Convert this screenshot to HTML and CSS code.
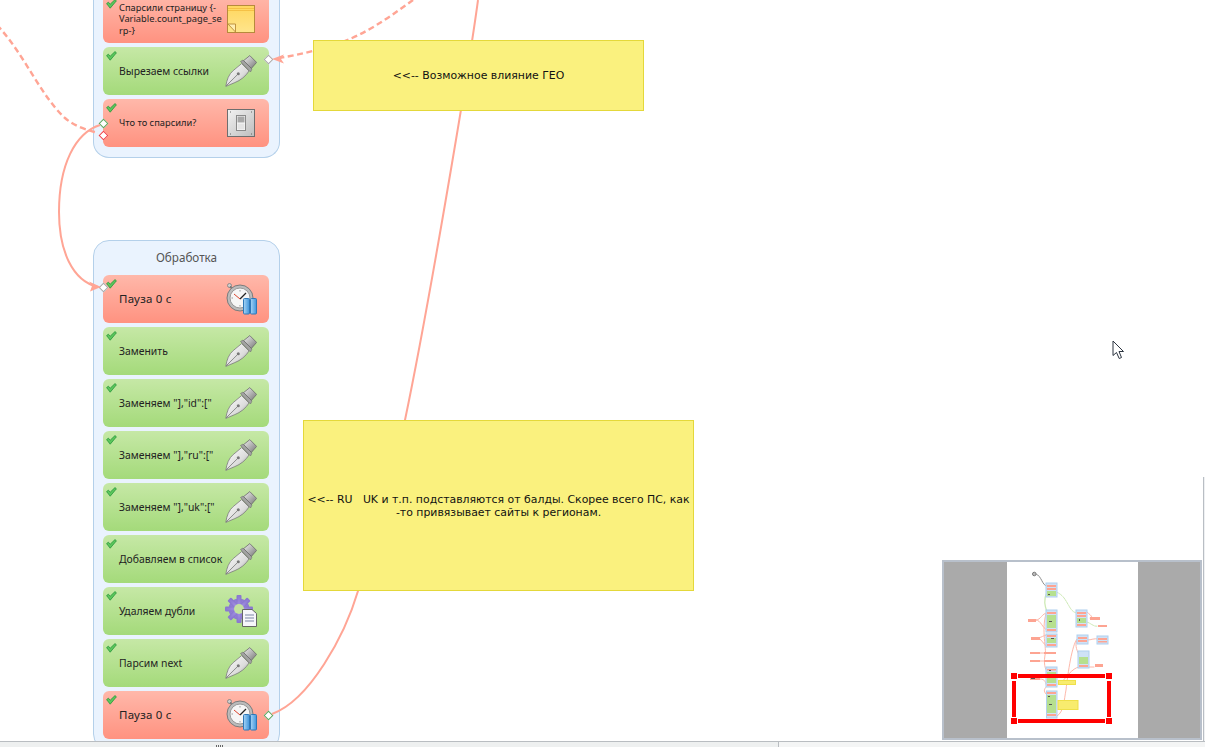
FILE: index.html
```html
<!DOCTYPE html>
<html lang="ru">
<head>
<meta charset="utf-8">
<title>Диаграмма</title>
<link rel="stylesheet" href="styles.css">
</head>
<body>
<svg class="defs" width="0" height="0" aria-hidden="true">
  <defs>
    <linearGradient id="penBody" x1="0" y1="0" x2="1" y2="1"><stop offset="0" stop-color="#ffffff"/><stop offset=".6" stop-color="#dcdcdc"/><stop offset="1" stop-color="#8a8a8a"/></linearGradient>
    <linearGradient id="penCap" x1="0" y1="0" x2="1" y2="1"><stop offset="0" stop-color="#efefef"/><stop offset=".5" stop-color="#b4b4b4"/><stop offset="1" stop-color="#757575"/></linearGradient>
    <linearGradient id="noteFill" x1="0" y1="0" x2="0" y2="1"><stop offset="0" stop-color="#ffd75e"/><stop offset="1" stop-color="#ffe58c"/></linearGradient>
    <linearGradient id="switchFill" x1="0" y1="0" x2="1" y2="1"><stop offset="0" stop-color="#f2f2f2"/><stop offset="1" stop-color="#bdbdbd"/></linearGradient>
    <radialGradient id="gearFill"><stop offset="0" stop-color="#a99ae6"/><stop offset="1" stop-color="#8a78d0"/></radialGradient>
    <linearGradient id="barFill" x1="0" y1="0" x2="1" y2="0"><stop offset="0" stop-color="#a6d4f5"/><stop offset="1" stop-color="#3f95dc"/></linearGradient>
    <symbol id="i-check" viewBox="0 0 11 10"><path d="M.6 4.6 2.4 3.2 4.2 5.2 9 .6 10.4 1.8 4.2 9.2Z" fill="#5cc75c" stroke="#25963a" stroke-width=".8" stroke-linejoin="round"/></symbol>
    <symbol id="i-pen" viewBox="0 0 32 32">
      <path d="M.8 31.4C1.600 25 4 19 8.200 15.600L16.600 8.600 24 16C21 21 15.500 25.500 9.800 27.600Z" fill="url(#penBody)" stroke="#7a7a7a" stroke-width=".8" stroke-linejoin="round"/>
      <path d="M1.200 30.800 12.500 19.600" stroke="#666" stroke-width=".7"/>
      <circle cx="13.300" cy="18.800" r="1.500" fill="#777"/>
      <path d="M15.500 6.500 18 5 27 14 25.500 17Z" fill="#a2a2a2" stroke="#6e6e6e" stroke-width=".6"/>
      <path d="M18.600 5.600 24.800.600 31.600 7.400 26.400 13.400Z" fill="url(#penCap)" stroke="#6a6a6a" stroke-width=".8" stroke-linejoin="round"/>
    </symbol>
    <symbol id="i-pause" viewBox="0 0 32 32">
      <circle cx="4.500" cy="2.500" r="2" fill="#d0d0d0" stroke="#7c7c7c" stroke-width=".8"/>
      <path d="M5 3.500 8 6.500" stroke="#777" stroke-width="1.800"/>
      <circle cx="15" cy="15" r="13" fill="#bcbcbc" stroke="#7b7b7b"/>
      <circle cx="15" cy="15" r="10" fill="#f6f6f6" stroke="#999"/>
      <path d="M15 16 21 10" stroke="#222" stroke-width="1.300"/>
      <path d="M15 16 9 11" stroke="#d9442e"/>
      <path d="M6.500 15H8M15 7V8.500M15 22V23.500" stroke="#999"/>
      <rect x="18.500" y="15.500" width="6" height="15.500" rx="1" fill="url(#barFill)" stroke="#2e78b8"/>
      <rect x="25.500" y="15.500" width="6" height="15.500" rx="1" fill="url(#barFill)" stroke="#2e78b8"/>
    </symbol>
    <symbol id="i-note" viewBox="0 0 28 28">
      <rect x=".5" y=".5" width="27" height="27" fill="url(#noteFill)" stroke="#b78a3c"/>
      <path d="M1 3.500H27M1 5.500H27" stroke="#f2ba3e" stroke-width=".8"/>
      <path d="M1 19H8.500V27Z" fill="#ffedb0" stroke="#c09440"/>
    </symbol>
    <symbol id="i-switch" viewBox="0 0 28 28">
      <rect x=".5" y=".5" width="27" height="27" fill="url(#switchFill)" stroke="#6e6e6e"/>
      <rect x="9.500" y="6.500" width="9" height="15" fill="#fafafa" stroke="#8a8a8a"/>
      <rect x="10.500" y="7.500" width="7" height="6" fill="#a8a8a8"/>
      <rect x="10.500" y="14.500" width="7" height="6" fill="#e4e4e4"/>
      <path d="M3 3H4M24 3H25M3 25H4M24 25H25" stroke="#666" stroke-width="1.200"/>
    </symbol>
    <symbol id="i-gear" viewBox="0 0 32 32">
      <g fill="url(#gearFill)">
        <circle cx="14" cy="14" r="10.500"/>
        <rect x="11.500" y="0" width="5" height="28" rx="1"/><rect x="0" y="11.500" width="28" height="5" rx="1"/><rect x="11.500" y="0" width="5" height="28" rx="1" transform="rotate(45 14 14)"/><rect x="11.500" y="0" width="5" height="28" rx="1" transform="rotate(-45 14 14)"/>
      </g>
      <circle cx="14" cy="14" r="5" fill="#c3e29f"/>
      <path d="M17.500 14.500H27L31.500 18.500V31.500H17.500Z" fill="#f6f6fb" stroke="#666"/>
      <path d="M20 20H29M20 23H29M20 26H29" stroke="#7c87a6"/>
    </symbol>
  </defs>
</svg>

<main class="canvas">
  <section class="group group-top">
    <div class="row red"><svg class="check"><use href="#i-check"/></svg><span class="label small">Спарсили страницу {-<br>Variable.count_page_se<br>rp-}</span><svg class="icon note"><use href="#i-note"/></svg></div>
    <div class="row green"><svg class="check"><use href="#i-check"/></svg><span class="label">Вырезаем ссылки</span><svg class="icon"><use href="#i-pen"/></svg><i class="port port-right port-top"></i></div>
    <div class="row red"><svg class="check"><use href="#i-check"/></svg><span class="label small">Что то спарсили?</span><svg class="icon note"><use href="#i-switch"/></svg><i class="port port-left port-ok"></i><i class="port port-left port-bad"></i></div>
  </section>

  <section class="group group-main">
    <h2 class="group-title">Обработка</h2>
    <div class="row red"><svg class="check"><use href="#i-check"/></svg><span class="label big">Пауза 0 с</span><svg class="icon"><use href="#i-pause"/></svg><i class="port port-left port-in"></i></div>
    <div class="row green"><svg class="check"><use href="#i-check"/></svg><span class="label">Заменить</span><svg class="icon"><use href="#i-pen"/></svg></div>
    <div class="row green"><svg class="check"><use href="#i-check"/></svg><span class="label">Заменяем "],"id":["</span><svg class="icon"><use href="#i-pen"/></svg></div>
    <div class="row green"><svg class="check"><use href="#i-check"/></svg><span class="label">Заменяем "],"ru":["</span><svg class="icon"><use href="#i-pen"/></svg></div>
    <div class="row green"><svg class="check"><use href="#i-check"/></svg><span class="label">Заменяем "],"uk":["</span><svg class="icon"><use href="#i-pen"/></svg></div>
    <div class="row green"><svg class="check"><use href="#i-check"/></svg><span class="label">Добавляем в список</span><svg class="icon"><use href="#i-pen"/></svg></div>
    <div class="row green"><svg class="check"><use href="#i-check"/></svg><span class="label">Удаляем дубли</span><svg class="icon"><use href="#i-gear"/></svg></div>
    <div class="row green"><svg class="check"><use href="#i-check"/></svg><span class="label">Парсим next</span><svg class="icon"><use href="#i-pen"/></svg></div>
    <div class="row red"><svg class="check"><use href="#i-check"/></svg><span class="label big">Пауза 0 с</span><svg class="icon"><use href="#i-pause"/></svg><i class="port port-right port-out"></i></div>
  </section>

  <svg class="links" viewBox="0 0 1205 747" aria-hidden="true">
    <path class="link" d="M478 0C470 60 430 300 405 420C390 490 375 550 358 591C345 635 310 700 272 714"/>
    <path class="link" d="M100 125C75 133 59 165 59 212C59 250 72 281 98 287"/>
    <path class="link dash" d="M-3 25C25 55 40 95 65 118C75 127 88 130 98 133"/>
    <path class="link dash" d="M413 0C395 13 375 28 350 39C335 46 300 55 276 58.500"/>
    <path class="arrow" d="M272 59 284 54.500 281 59 284 63.500Z"/>
    <path class="arrow" d="M101 287 89 281.500 92 286 90 291.500Z"/>
  </svg>

  <aside class="sticky sticky-geo">&lt;&lt;-- Возможное влияние ГЕО</aside>
  <aside class="sticky sticky-ru"><span>&lt;&lt;-- RU &nbsp; UK и т.п. подставляются от балды. Скорее всего ПС, как<br>-то привязывает сайты к регионам.</span></aside>

  <svg class="cursor" viewBox="0 0 13 20" aria-hidden="true"><path d="M1 1V15.500L4.500 12.500 7.200 18.500 9.500 17.500 7 11.500H11.500Z" fill="#fff" stroke="#2c3440" stroke-linejoin="round"/></svg>

  <svg class="minimap" viewBox="944 562 256 176" aria-hidden="true">
    <rect x="944" y="562" width="256" height="176" fill="#aaa"/>
    <rect x="1007" y="562" width="131" height="176" fill="#fff"/>
    <circle cx="1034.300" cy="574" r="1.800" fill="#bbb" stroke="#777"/>
    <g fill="none" stroke-linecap="round">
      <path d="M1036 574C1042 576 1042 586 1047 586" stroke="#8d8d8d"/>
      <path d="M1047 592C1043 600 1045 606 1047 612" stroke="#cdeab5" stroke-width="1.300"/>
      <path d="M1056 592C1068 596 1068 612 1077 613M1087 622C1092 624 1094 627 1098 626" stroke="#cdeab5" stroke-dasharray="2 1"/>
      <g stroke="#fdb8aa" stroke-width="1">
        <path d="M1036 620C1041 620 1042 613 1047 613M1036 620C1041 620 1042 628 1047 630M1037 638C1042 638 1043 635 1047 635M1037 638C1042 638 1043 645 1047 646"/>
        <path d="M1046 614C1041 630 1047 650 1045 655C1043 668 1047 670 1047 672M1040 653H1045M1040 661H1045M1040 679C1046 679 1045 683 1047 686C1043 690 1044 692 1047 695"/>
        <path d="M1057 716C1064 712 1064 700 1066 690C1068 672 1072 645 1077 639M1087 640C1092 640 1094 638 1098 639M1087 612C1090 615 1094 617 1090 618M1060 684C1066 678 1072 668 1079 667M1088 667H1094M1077 640C1074 646 1078 652 1079 655"/>
      </g>
    </g>
    <g class="mini-groups">
      <rect x="1046" y="583" width="11" height="14"/><rect x="1046" y="610" width="11" height="22"/><rect x="1046" y="634" width="11" height="13"/><rect x="1046" y="667" width="11" height="20"/><rect x="1046.500" y="691" width="10.500" height="27"/>
      <rect x="1076" y="610" width="11" height="17"/><rect x="1077" y="635" width="11" height="9"/><rect x="1097" y="636" width="11" height="8"/><rect x="1078" y="651" width="11" height="17"/>
    </g>
    <g fill="#fda492">
      <rect x="1047" y="585" width="9" height="2"/><rect x="1047" y="588" width="9" height="2"/><rect x="1047" y="612" width="9" height="2"/><rect x="1047" y="629" width="9" height="2"/><rect x="1047" y="635" width="9" height="2"/><rect x="1047" y="644" width="9" height="2"/><rect x="1047" y="669" width="9" height="1.500"/><rect x="1047" y="684" width="9" height="2"/><rect x="1047" y="692" width="9" height="2"/><rect x="1047" y="714" width="9" height="2"/>
      <rect x="1077" y="612" width="9" height="2"/><rect x="1077" y="615" width="9" height="2"/><rect x="1077" y="624" width="9" height="2"/><rect x="1078" y="637" width="9" height="2"/><rect x="1078" y="640" width="9" height="2"/><rect x="1098" y="638" width="9" height="2"/><rect x="1098" y="641" width="9" height="1.500"/><rect x="1079" y="665" width="9" height="2"/>
      <rect x="1028" y="619" width="8" height="3"/><rect x="1031" y="637" width="9" height="3"/><rect x="1030" y="652" width="10" height="2"/><rect x="1030" y="660" width="10" height="2"/><rect x="1030" y="678" width="10" height="2"/><rect x="1044" y="652" width="12" height="2"/><rect x="1044" y="660" width="12" height="2"/><rect x="1090" y="617" width="10" height="3"/><rect x="1098" y="625" width="9" height="2"/><rect x="1095" y="664" width="8" height="3"/>
    </g>
    <g fill="#b6e08f">
      <rect x="1047" y="591" width="9" height="5"/><rect x="1047" y="615" width="9" height="13"/><rect x="1047" y="638" width="9" height="5"/><rect x="1047" y="672" width="9" height="11"/><rect x="1047" y="695" width="9" height="18"/><rect x="1077" y="618" width="9" height="5"/><rect x="1079" y="657" width="9" height="7"/>
    </g>
    <g fill="#555">
      <rect x="1048" y="594" width="2" height="1"/><rect x="1049" y="621" width="3" height="1"/><rect x="1051" y="638" width="3" height="1"/><rect x="1049" y="670" width="2" height="1"/><rect x="1048" y="696" width="2" height="1"/><rect x="1049" y="704" width="3" height="1"/><rect x="1079" y="619" width="1" height="2"/><rect x="1031" y="678" width="4" height="1"/>
    </g>
    <g fill="#f8ec6e" stroke="#efe04a"><rect x="1058.500" y="680.500" width="17" height="4"/><rect x="1058" y="700.500" width="20" height="9"/></g>
    <g fill="none" stroke="#f00" stroke-width="4"><path d="M1018 676H1105M1018 721H1105M1014 681V717M1109 681V717"/></g>
    <g fill="#f00"><rect x="1011" y="673" width="6" height="6"/><rect x="1106" y="673" width="6" height="6"/><rect x="1011" y="718" width="6" height="6"/><rect x="1106" y="718" width="6" height="6"/></g>
  </svg>

  <div class="v-scroll"></div>
  <div class="h-scroll"><div class="h-thumb"><span class="grip"></span></div></div>
</main>
</body>
</html>
```

FILE: styles.css
```css
* { box-sizing: border-box; }
html, body { margin: 0; height: 100%; overflow: hidden; background: #fff; }
.defs { position: absolute; }
.canvas {
  position: relative;
  width: 1205px;
  height: 747px;
  overflow: hidden;
  background: #fff;
  font-family: "Noto Sans", sans-serif;
  color: #222;
}
.links { position: absolute; left: 0; top: 0; width: 1205px; height: 747px; }
.link { fill: none; stroke: #ffa595; stroke-width: 2; }
.link.dash { stroke-width: 2.4; stroke-dasharray: 6 3.500; }
.arrow { fill: #ffa595; }

.group {
  position: absolute;
  left: 93px;
  width: 187px;
  display: flex;
  flex-direction: column;
  gap: 4px;
  padding: 0 10px 10px 10px;
  background: #eaf3fe;
  border: 1px solid #b4d0ea;
  border-radius: 16px;
}
.group-top { top: -40px; height: 198px; justify-content: flex-end; border-top: 0; border-radius: 0 0 16px 16px; }
.group-main { top: 240px; height: 510px; }
.group-title {
  margin: 0;
  height: 30px;
  line-height: 32px;
  font-size: 11.700px;
  font-weight: 400;
  text-align: center;
  color: #555;
}

.row {
  position: relative;
  flex: none;
  width: 166px;
  height: 48px;
  margin-left: -1px;
  padding: 0 11px 0 16px;
  display: flex;
  align-items: center;
  justify-content: space-between;
  border-radius: 6px;
}
.red { background: linear-gradient(#ffb8aa, #ff9280); }
.green { background: linear-gradient(#c6e8a6, #a4da7a); }
.check { position: absolute; left: 3px; top: 4px; width: 11px; height: 10px; }
.label {
  flex: none;
  width: 106px;
  margin-top: 1px;
  font-size: 10.400px;
  line-height: 11.500px;
  white-space: nowrap;
}
.label.small { margin-top: 0; font-size: 9.300px; }
.label.big { margin-top: 0; font-size: 11.500px; letter-spacing: .2px; }
.icon { flex: none; width: 32px; height: 32px; margin-right: 1px; }
.icon.note { width: 28px; height: 28px; margin-right: 3px; }

.port {
  position: absolute;
  width: 7px;
  height: 7px;
  background: #fff;
  border: 1px solid #a9a9a9;
  transform: rotate(45deg);
}
.port-right { right: -3px; }
.port-left { left: -3.500px; }
.port-top { top: 8.500px; }
.port-ok { top: 20.500px; border-color: #5fa75f; }
.port-bad { top: 32.500px; border-color: #f0444a; }
.port-in { top: 8.500px; }
.port-out { top: 20.500px; border-color: #5fa75f; }

.sticky {
  position: absolute;
  display: flex;
  align-items: center;
  justify-content: center;
  text-align: center;
  background: #faf17e;
  border: 1px solid #e4d83a;
  font-family: "DejaVu Sans", sans-serif;
  font-size: 10.900px;
  line-height: 13px;
  color: #111;
}
.sticky-geo { left: 313px; top: 40px; width: 331px; height: 71px; }
.sticky-ru { left: 303px; top: 420px; width: 391px; height: 171px; white-space: nowrap; }

.cursor { position: absolute; left: 1112px; top: 340px; width: 13px; height: 20px; }
.minimap {
  position: absolute;
  left: 942px;
  top: 560px;
  width: 260px;
  height: 180px;
  border: 2px solid #b8c0cb;
}
.mini-groups rect { fill: #cfe2f6; stroke: #b0cfee; stroke-width: 1; }

.v-scroll { position: absolute; right: 0; top: 477px; width: 2px; height: 264px; background: #eef0f2; border-left: 1px solid #b9bec4; }
.h-scroll {
  position: absolute;
  left: 0;
  bottom: 0;
  width: 1205px;
  height: 6px;
  background: #f4f5f5;
  border-top: 1px solid #b9bdc1;
}
.h-thumb { position: relative; width: 779px; height: 6px; background: #eef0f0; border-right: 1px solid #b9bdc1; }
.grip {
  position: absolute;
  left: 216px;
  top: 3px;
  width: 7px;
  height: 2px;
  background: repeating-linear-gradient(90deg, #666 0 1px, transparent 1px 2px);
}
```
